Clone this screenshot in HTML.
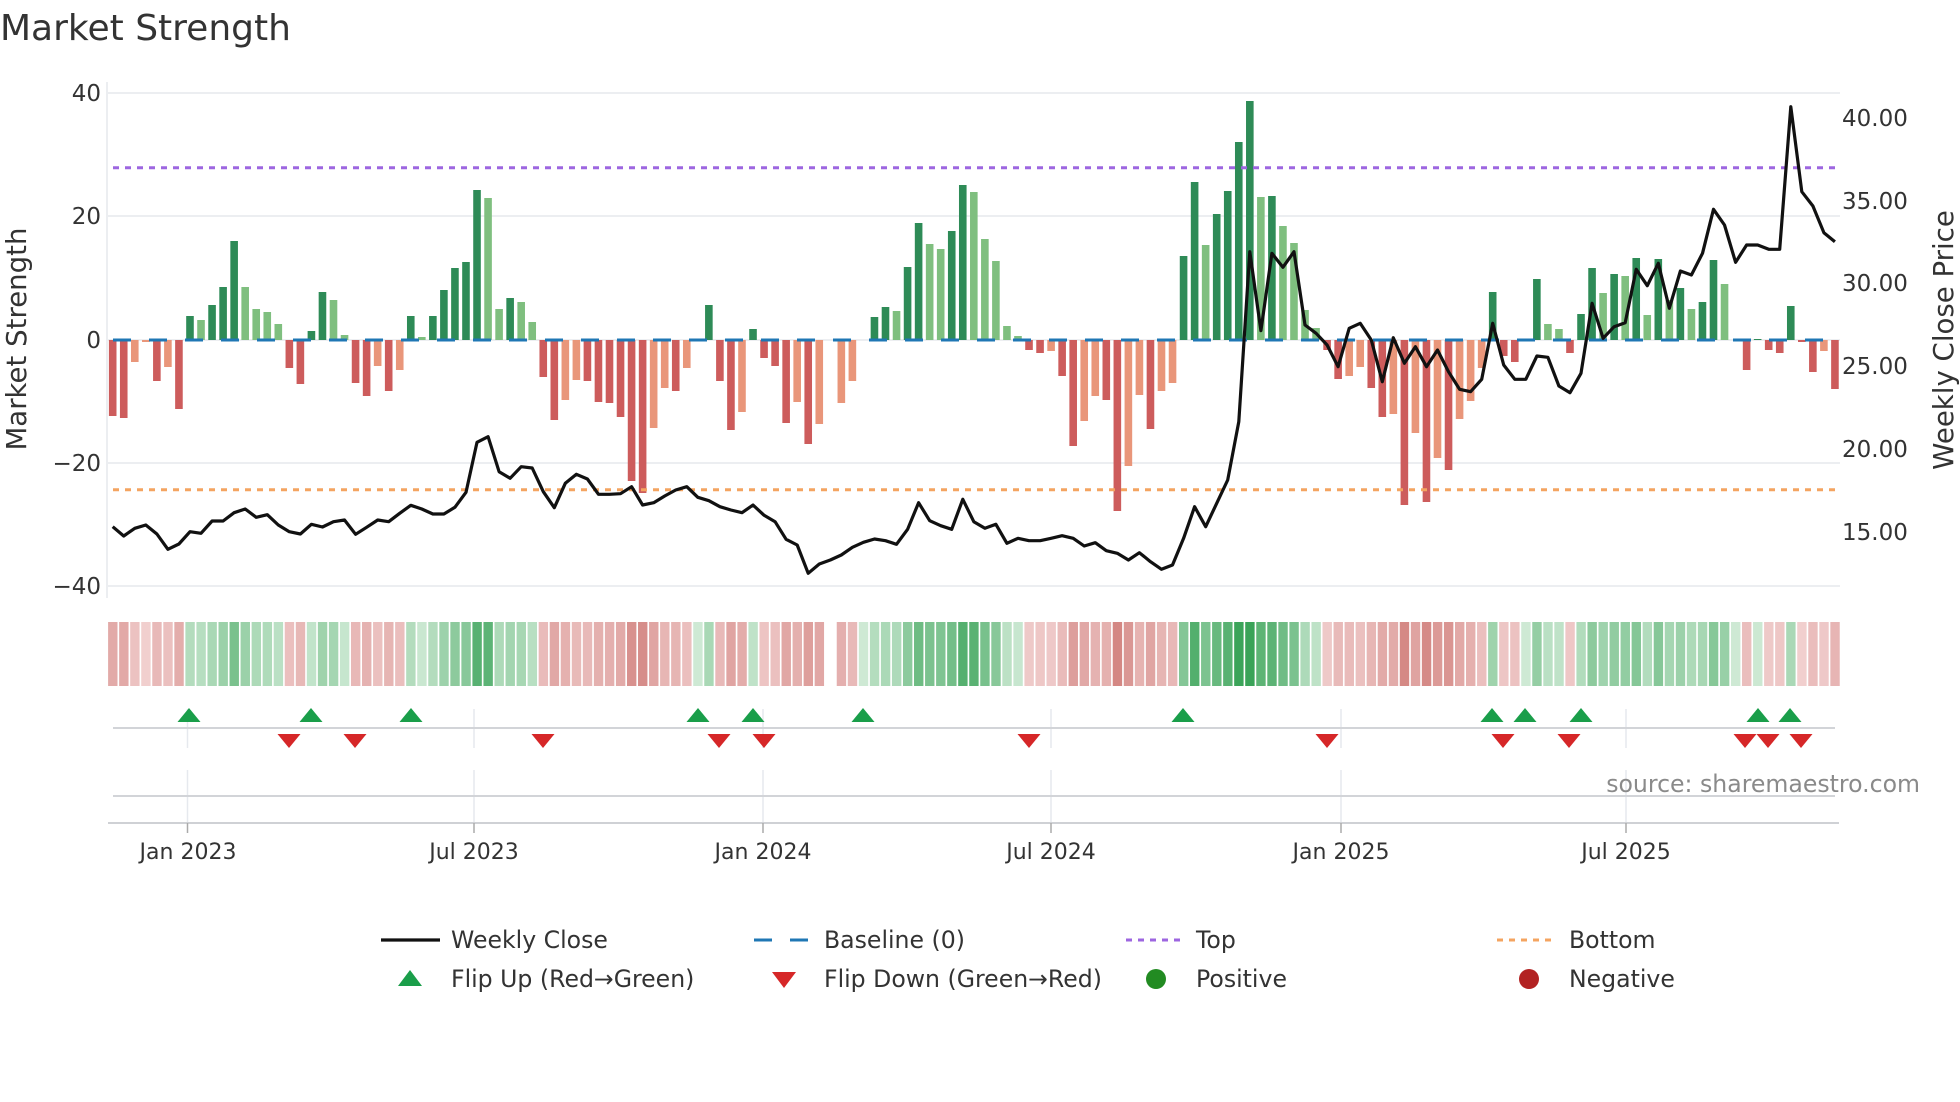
<!DOCTYPE html>
<html><head><meta charset="utf-8">
<style>
html,body{margin:0;padding:0;background:#fff;}
svg{display:block;}
text{font-family:"DejaVu Sans","Liberation Sans",sans-serif;fill:#333;}
</style></head>
<body>
<svg id="s" width="1960" height="1102" viewBox="0 0 1960 1102" xmlns="http://www.w3.org/2000/svg">
<rect width="1960" height="1102" fill="#fff"/>
<text x="0" y="40" font-size="36">Market Strength</text>
<g stroke="#eceef1" stroke-width="2">
<line x1="107" y1="93" x2="1840" y2="93"/>
<line x1="107" y1="216" x2="1840" y2="216"/>
<line x1="107" y1="340" x2="1840" y2="340"/>
<line x1="107" y1="463" x2="1840" y2="463"/>
<line x1="107" y1="586" x2="1840" y2="586"/>
<line x1="107" y1="82" x2="107" y2="598"/>
</g>
<g font-size="23" text-anchor="end">
<text x="101" y="101">40</text>
<text x="101" y="224">20</text>
<text x="101" y="348">0</text>
<text x="101" y="471">−20</text>
<text x="101" y="594">−40</text>
</g>
<g font-size="23">
<text x="1842" y="126">40.00</text>
<text x="1842" y="209">35.00</text>
<text x="1842" y="291">30.00</text>
<text x="1842" y="374">25.00</text>
<text x="1842" y="457">20.00</text>
<text x="1842" y="540">15.00</text>
</g>
<text font-size="27.6" text-anchor="middle" transform="translate(26,339) rotate(-90)">Market Strength</text>
<text font-size="27.6" text-anchor="middle" transform="translate(1953,340) rotate(-90)">Weekly Close Price</text>
<g id="bars"></g>
<line x1="113" y1="340" x2="1836" y2="340" stroke="#1f77b4" stroke-width="3" stroke-dasharray="18 18"/>
<line x1="113" y1="167.7" x2="1836" y2="167.7" stroke="#9d66e0" stroke-width="3" stroke-dasharray="6 6"/>
<line x1="113" y1="489.7" x2="1836" y2="489.7" stroke="#f4a460" stroke-width="3" stroke-dasharray="6 6"/>
<polyline id="price" fill="none" stroke="#111" stroke-width="3.2" stroke-linejoin="round"/>
<g id="strip"></g>
<g stroke="#e6e9ee" stroke-width="1.5">
<line x1="187.5" y1="709" x2="187.5" y2="748"/><line x1="187.5" y1="770" x2="187.5" y2="822"/>
<line x1="474" y1="709" x2="474" y2="748"/><line x1="474" y1="770" x2="474" y2="822"/>
<line x1="763" y1="709" x2="763" y2="748"/><line x1="763" y1="770" x2="763" y2="822"/>
<line x1="1051" y1="709" x2="1051" y2="748"/><line x1="1051" y1="770" x2="1051" y2="822"/>
<line x1="1341" y1="709" x2="1341" y2="748"/><line x1="1341" y1="770" x2="1341" y2="822"/>
<line x1="1626" y1="709" x2="1626" y2="748"/><line x1="1626" y1="770" x2="1626" y2="822"/>
</g>
<line x1="113" y1="728" x2="1835" y2="728" stroke="#d2d4d8" stroke-width="2"/>
<line x1="113" y1="796" x2="1835" y2="796" stroke="#d2d4d8" stroke-width="2"/>
<line x1="108" y1="823" x2="1839" y2="823" stroke="#cfd1d5" stroke-width="2"/>
<g stroke="#aaa" stroke-width="1.5">
<line x1="187.5" y1="823" x2="187.5" y2="833"/><line x1="474" y1="823" x2="474" y2="833"/>
<line x1="763" y1="823" x2="763" y2="833"/><line x1="1051" y1="823" x2="1051" y2="833"/>
<line x1="1341" y1="823" x2="1341" y2="833"/><line x1="1626" y1="823" x2="1626" y2="833"/>
</g>
<g id="marks"></g>
<g font-size="22" text-anchor="middle">
<text x="188" y="859">Jan 2023</text>
<text x="474" y="859">Jul 2023</text>
<text x="763" y="859">Jan 2024</text>
<text x="1051" y="859">Jul 2024</text>
<text x="1341" y="859">Jan 2025</text>
<text x="1626" y="859">Jul 2025</text>
</g>
<text x="1920" y="792" font-size="23.6" text-anchor="end" style="fill:#8a8a8a">source: sharemaestro.com</text>
<line x1="381" y1="940" x2="440" y2="940" stroke="#111" stroke-width="3.2"/>
<text x="451" y="948" font-size="23.6">Weekly Close</text>
<line x1="754" y1="940" x2="808" y2="940" stroke="#1f77b4" stroke-width="3" stroke-dasharray="18 18"/>
<text x="824" y="948" font-size="23.6">Baseline (0)</text>
<line x1="1126" y1="940" x2="1181" y2="940" stroke="#9d66e0" stroke-width="3" stroke-dasharray="6 6"/>
<text x="1196" y="948" font-size="23.6">Top</text>
<line x1="1497" y1="940" x2="1554" y2="940" stroke="#f4a460" stroke-width="3" stroke-dasharray="6 6"/>
<text x="1569" y="948" font-size="23.6">Bottom</text>
<polygon points="398,986 422,986 410,970" fill="#1a9e4a"/>
<text x="451" y="987" font-size="23.6">Flip Up (Red→Green)</text>
<polygon points="772,972 796,972 784,988" fill="#d62728"/>
<text x="824" y="987" font-size="23.6">Flip Down (Green→Red)</text>
<circle cx="1156" cy="979" r="10" fill="#228b22"/>
<text x="1196" y="987" font-size="23.6">Positive</text>
<circle cx="1529" cy="979" r="10" fill="#b22222"/>
<text x="1569" y="987" font-size="23.6">Negative</text>
</svg>
<script>
var B="-76d,-78d,-22l,-2l,-41d,-27l,-69d,24d,20l,35d,53d,99d,53l,31l,28l,16l,-28d,-44d,9d,48d,40l,5l,-43d,-56d,-26l,-51d,-30l,24d,3l,24d,50d,72d,78d,150d,142l,31l,42d,38l,18l,-37d,-80d,-60l,-40l,-41d,-62d,-63d,-77d,-141d,-153d,-88l,-48l,-51d,-28l,0d,35d,-41d,-90d,-72l,11d,-18d,-26d,-83d,-62l,-104d,-84l,0d,-63l,-41l,0d,23d,33d,29l,73d,117d,96l,91l,109d,155d,148l,101l,79l,14l,4l,-10d,-13d,-11l,-36d,-106d,-81l,-56l,-60d,-171d,-126l,-55l,-89d,-51l,-43l,84d,158d,95l,126d,149d,198d,239d,143l,144d,114l,97l,30l,12l,-10d,-39d,-36l,-27l,-48d,-77d,-74l,-165d,-93l,-162d,-118l,-130d,-79l,-61l,-28l,48d,-16d,-22d,0d,61d,16l,11l,-13d,26d,72d,47l,66d,64l,82d,25l,81d,40l,52d,31l,38d,80d,56l,0d,-30d,1d,-10d,-13d,34d,-2d,-32d,-11l,-49d".split(",");
var L=[1340,1368,1345,1335,1362,1408,1392,1355,1360,1323,1323,1298,1287,1312,1304,1335,1355,1362,1333,1341,1325,1320,1363,1342,1320,1325,1300,1276,1287,1302,1302,1282,1237,1087,1070,1175,1195,1160,1164,1235,1283,1210,1183,1197,1243,1243,1241,1220,1275,1268,1248,1230,1220,1252,1262,1280,1290,1298,1275,1306,1325,1378,1395,1480,1452,1440,1425,1402,1387,1377,1382,1393,1348,1268,1322,1337,1348,1258,1325,1345,1333,1390,1375,1382,1382,1375,1367,1375,1398,1388,1412,1420,1440,1418,1445,1468,1455,1375,1280,1340,1270,1200,1025,515,752,520,562,515,735,760,795,860,745,730,780,905,773,850,800,860,810,875,928,935,898,730,855,898,898,828,832,918,938,880,670,775,740,728,568,617,550,685,573,585,520,388,435,547,495,495,508,508,80,335,378,458,485];
var NS="http://www.w3.org/2000/svg";
function el(t,a,p){var e=document.createElementNS(NS,t);for(var k in a)e.setAttribute(k,a[k]);p.appendChild(e);return e;}
var bars=document.getElementById("bars"),strip=document.getElementById("strip");
function mix(a,b,t){return "rgb("+a.map(function(v,i){return Math.round(v+(b[i]-v)*t)}).join(",")+")";}
var pts=[];
for(var i=0;i<B.length;i++){
 var v=parseFloat(B[i]),ty=B[i].slice(-1),x=112.7+11.04*i;
 var col=v>=0?(ty=="d"?"#2e8b57":"#7fbf7f"):(ty=="d"?"#cd5c5c":"#e9967a");
 if(v!=0){el("rect",{x:x-3.8,y:v>0?340-v:340,width:7.6,height:Math.abs(v),fill:col},bars);}
 if(i!=65){
  var n=Math.min(Math.abs(v)/200,1),t=0.12+0.88*Math.pow(n,0.8);
  var c=v>=0?mix([226,243,229],[58,163,88],t):mix([246,220,220],[208,125,121],t);
  el("rect",{x:x-4.6,y:622,width:9.4,height:64,fill:c},strip);
 }
 pts.push(x.toFixed(1)+","+(80+L[i]/3).toFixed(1));
}
document.getElementById("price").setAttribute("points",pts.join(" "));
var m=document.getElementById("marks");
[189,311,411,698,753,863,1183,1492,1525,1581,1758,1790].forEach(function(x){el("polygon",{points:(x-11.5)+",722 "+(x+11.5)+",722 "+x+",708",fill:"#1a9e4a"},m);});
[289,355,543,719,764,1029,1327,1503,1569,1745,1768,1801].forEach(function(x){el("polygon",{points:(x-11.5)+",734 "+(x+11.5)+",734 "+x+",748",fill:"#d62728"},m);});
</script>
</body></html>
